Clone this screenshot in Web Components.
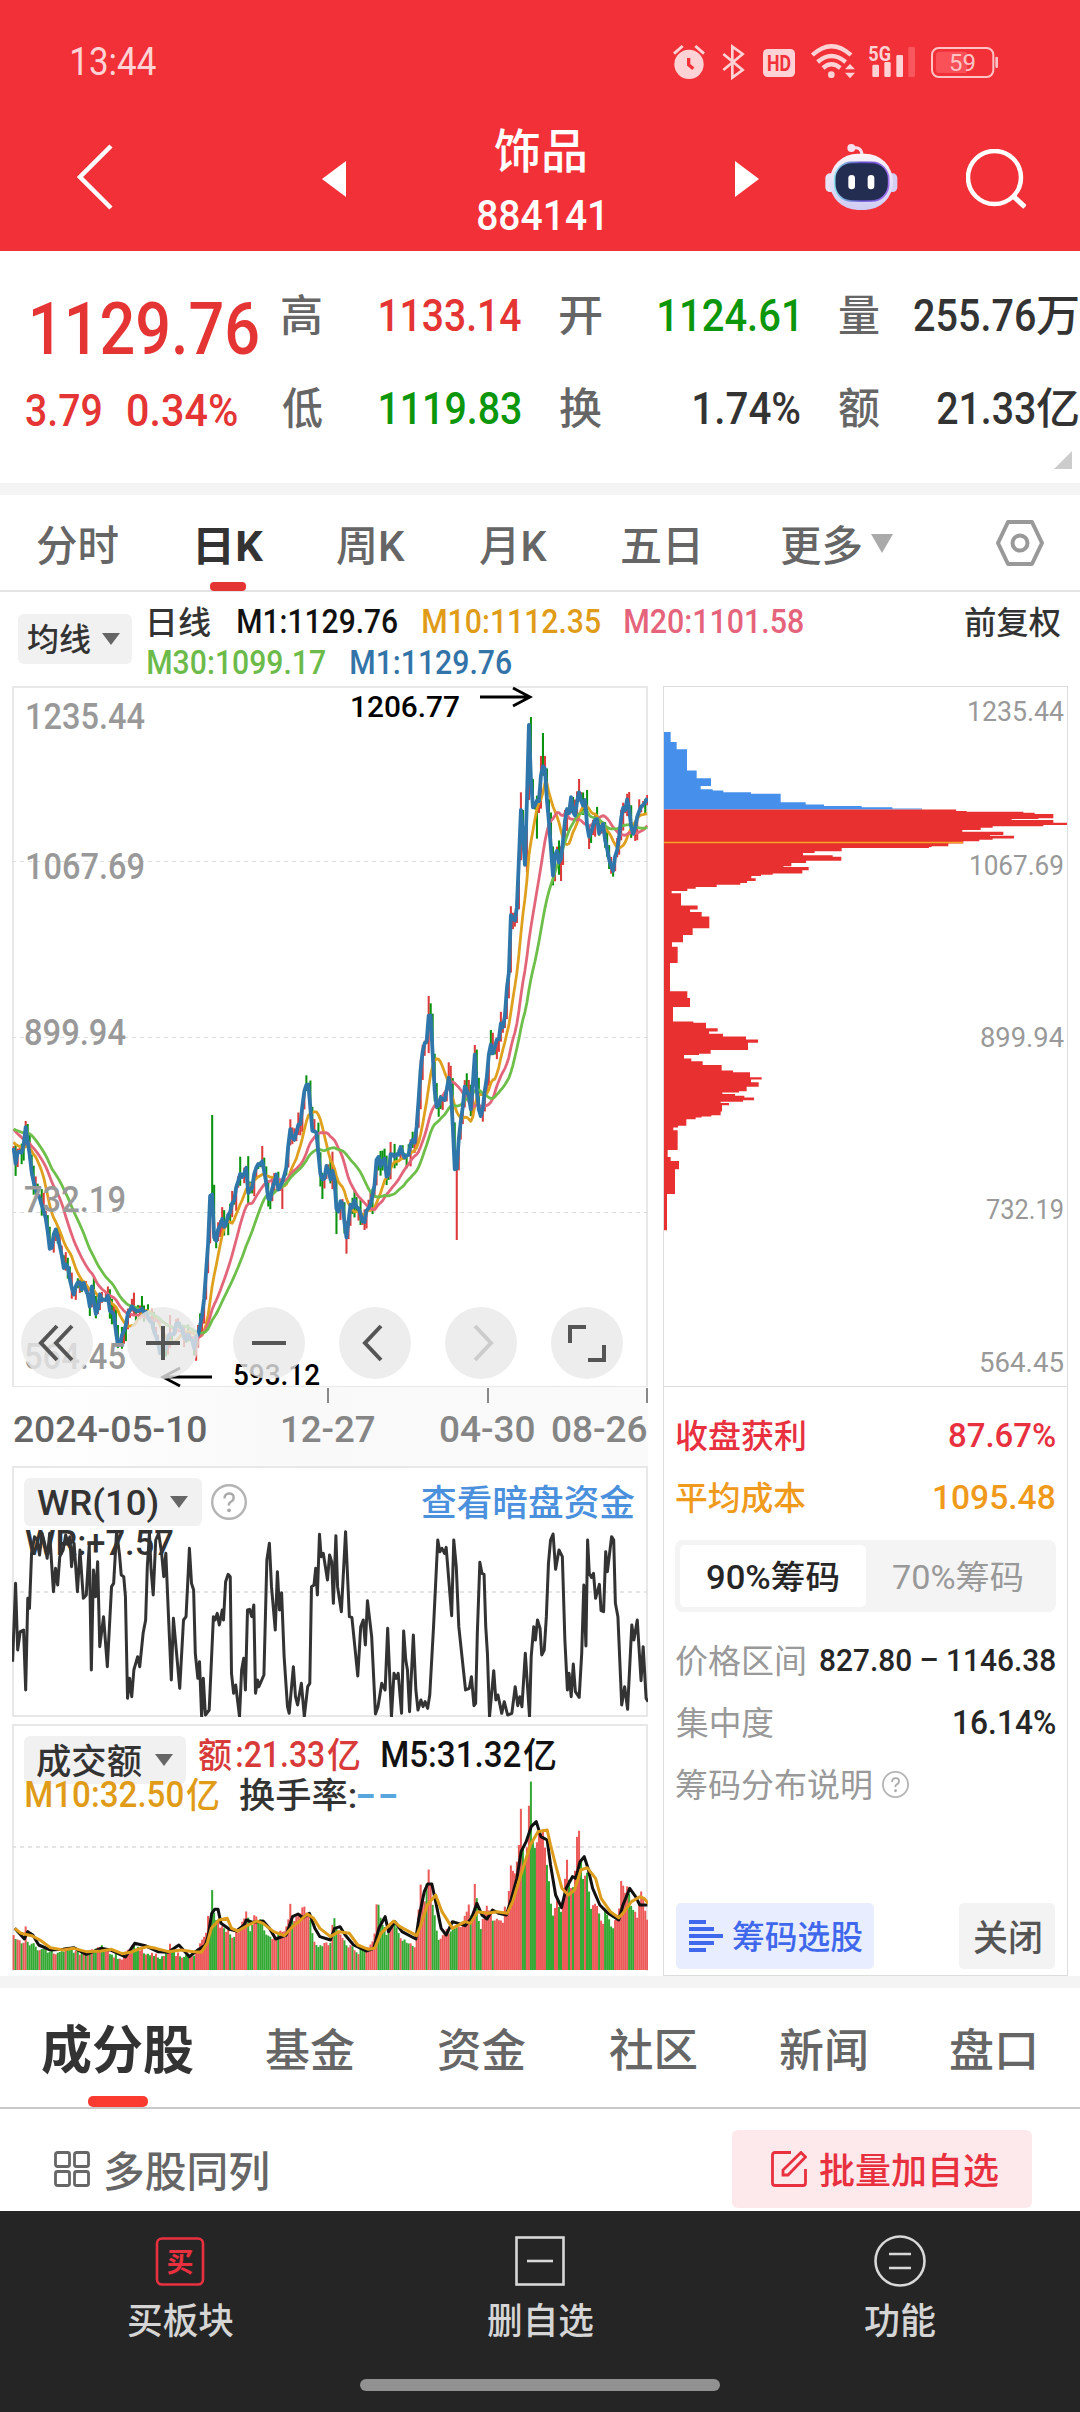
<!DOCTYPE html>
<html lang="zh-CN">
<head>
<meta charset="utf-8">
<title>饰品 884141</title>
<style>
  body { margin: 0; background: #fff; font-family: Roboto, "Noto Sans CJK SC", sans-serif; }
</style>
</head>
<body>
<stock-page></stock-page>

<script>
const FONT = 'Roboto, "Noto Sans CJK SC", sans-serif';

// one line of text squeezed or stretched so that its ink is exactly `w` wide
const ctx = document.createElement('canvas').getContext('2d');
class FitText extends HTMLElement {
  connectedCallback() {
    const w = +this.getAttribute('w');
    const size = +this.getAttribute('size');
    const weight = this.getAttribute('weight') || 400;
    const text = this.textContent.trim();
    ctx.font = `${weight} ${size}px ${FONT}`;
    const m = ctx.measureText(text);
    const k = w / (m.actualBoundingBoxLeft + m.actualBoundingBoxRight);
    // han glyphs sit a little high in a Roboto line
    const dy = /[\u4e00-\u9fff]/.test(text) ? size * .045 : 0;
    if (!this.shadowRoot) this.attachShadow({ mode: 'open' });
    this.shadowRoot.innerHTML = `
      <style>
        :host { display: block; flex: none; width: ${w}px; height: ${size}px; }
        span { display: block; width: max-content; white-space: nowrap; transform-origin: 0 0;
               font: ${weight} ${size}px/${size}px ${FONT};
               transform: translate(${m.actualBoundingBoxLeft * k}px, ${dy}px) scaleX(${k}); }
      </style>
      <span><slot></slot></span>`;
  }
}
customElements.define('fit-text', FitText);

function define(name, html) {
  customElements.define(name, class extends HTMLElement {
    connectedCallback() {
      if (this.shadowRoot) return;
      this.attachShadow({ mode: 'open' }).innerHTML = typeof html === 'function' ? html(this) : html;
    }
  });
}

const t = (text, w, size, style = '', weight = 500) =>
  `<fit-text w="${w}" size="${size}" weight="${weight}" style="${style}">${text}</fit-text>`;

/* ---------- header ---------- */

define('status-bar', `
  <style>
    :host { display: flex; align-items: center; height: 124px; padding: 0 60px 0 72px;
            justify-content: space-between; box-sizing: border-box; color: #ffd3d5; }
    svg { display: block; width: 360px; height: 64px; }
  </style>
  ${t('13:44', 84, 38, '', 400)}
  <svg viewBox="0 0 1080 192" fill="#ffd3d5" font-family='${FONT}'>
    <circle cx="87" cy="103" r="44"/>
    <path d="M42 71L68 48M106 48L132 71" stroke="#ffd3d5" stroke-width="9"/>
    <path d="M86 84V104L100 116" fill="none" stroke="#f23037" stroke-width="10"/>
    <path d="M190 72L248 120L217 143V50L248 72L190 120" fill="none" stroke="#ffd3d5" stroke-width="8"/>
    <rect x="309" y="57" width="96" height="84" rx="14"/>
    <text x="321" y="122" font-size="64" font-weight="700" fill="#f23037" textLength="72" lengthAdjust="spacingAndGlyphs">HD</text>
    <g fill="none" stroke="#ffd3d5" stroke-width="13">
      <path d="M457 75Q514 22 573 75M473 96Q514 60 557 96M489 114Q514 92 541 114"/>
    </g>
    <circle cx="514" cy="134" r="10"/>
    <path d="M555 118L570 102L585 118ZM555 128L570 145L585 128Z"/>
    <text x="625" y="92" font-size="62" font-weight="700" textLength="68" lengthAdjust="spacingAndGlyphs">5G</text>
    <rect x="637" y="104" width="20" height="37" rx="4"/>
    <rect x="673" y="96" width="19" height="45" rx="4"/>
    <rect x="709" y="75" width="20" height="66" rx="4"/>
    <rect x="745" y="51" width="20" height="90" rx="4" fill="#f8575d"/>
    <rect x="816" y="54" width="184" height="87" rx="20" fill="none" stroke="#ffc3c6" stroke-width="6"/>
    <rect x="828" y="65" width="94" height="64" rx="10" fill="#fa5057"/>
    <rect x="1006" y="80" width="8" height="34" rx="4" fill="#ffc3c6"/>
    <text x="867" y="123" font-size="72" fill="#ffc3c6" textLength="81" lengthAdjust="spacingAndGlyphs">59</text>
  </svg>`);

define('nav-bar', `
  <style>
    :host { display: flex; align-items: center; height: 127px; padding: 0 0 18px 77px; box-sizing: border-box; color: #fff; }
    svg { display: block; flex: none; }
    .title { display: flex; flex-direction: column; align-items: center; gap: 22px; width: 128px; height: 105px; margin: 0 131px 0 130px; }
  </style>
  <svg width="36" height="66" viewBox="0 0 36 66" style="margin-bottom:4px"><path d="M34 2L3 33L34 64" fill="none" stroke="#fff" stroke-width="4.500"/></svg>
  <svg width="24" height="36" viewBox="0 0 24 36" style="margin-left:209px"><path d="M24 0V36L0 18Z" fill="#fff"/></svg>
  <div class="title">
    ${t('饰品', 90, 47)}
    ${t('884141', 124, 42)}
  </div>
  <svg width="24" height="36" viewBox="0 0 24 36"><path d="M0 0V36L24 18Z" fill="#fff"/></svg>
  <svg width="74" height="70" viewBox="74 36 222 210" style="margin:0 0 2px 66px">
    <defs>
      <linearGradient id="shell" x2="0" y2="1"><stop offset="0" stop-color="#fdf4f8"/><stop offset="1" stop-color="#cfccf4"/></linearGradient>
      <linearGradient id="rim"><stop offset="0" stop-color="#8fe0ee"/><stop offset=".5" stop-color="#5b48c8"/><stop offset="1" stop-color="#a070f0"/></linearGradient>
    </defs>
    <path d="M154 52Q184 44 185 72" fill="none" stroke="#f6dfee" stroke-width="9"/>
    <circle cx="153" cy="51" r="12" fill="#f6dfee"/>
    <rect x="75" y="127" width="30" height="56" rx="14" fill="#e8e2f6"/>
    <rect x="261" y="127" width="30" height="56" rx="14" fill="#d6cff4"/>
    <rect x="88" y="68" width="190" height="169" rx="84" fill="url(#shell)"/>
    <rect x="103" y="94" width="162" height="116" rx="50" fill="#232d52" stroke="url(#rim)" stroke-width="5"/>
    <rect x="144" y="132" width="20" height="43" rx="10" fill="#fff"/>
    <rect x="202" y="132" width="20" height="43" rx="10" fill="#fff"/>
  </svg>
  <svg width="60" height="60" viewBox="0 0 60 60" style="margin-left:67px"><circle cx="28.500" cy="28.500" r="26.500" fill="none" stroke="#fff" stroke-width="4.500"/><path d="M47 47L59 58" stroke="#fff" stroke-width="5"/></svg>`);

define('quote-board', `
  <style>
    :host { display: grid; grid-template-columns: 282px 278px 279px 241px; height: 232px; border-bottom: 12px solid #f4f4f4; position: relative; overflow: hidden; }
    div { display: flex; flex-direction: column; padding-top: 42px; }
    p { display: flex; justify-content: space-between; margin: 0; height: 93px; color: #333; }
    .k { color: #666; }
    .up { color: #e43433; } .down { color: #0b960b; }
    .fold { position: absolute; right: 8px; bottom: 14px; width: 0; height: 0;
            border-left: 18px solid transparent; border-bottom: 18px solid #ccc; }
  </style>
  <div>
    <p class="up" style="height:96px">${t('1129.76', 225, 73, 'margin-left:33px')}</p>
    <p class="up" style="justify-content:start">${t('3.79', 75, 44, 'margin-left:26px')}${t('0.34%', 109, 44, 'margin-left:27px')}</p>
  </div>
  <div>
    <p><span class="k">${t('高', 39, 43)}</span><span class="up">${t('1133.14', 141, 45, 'margin-right:39px')}</span></p>
    <p><span class="k">${t('低', 40, 43)}</span><span class="down">${t('1119.83', 141, 45, 'margin-right:39px')}</span></p>
  </div>
  <div>
    <p><span class="k">${t('开', 41, 43)}</span><span class="down">${t('1124.61', 137, 45, 'margin-right:43px')}</span></p>
    <p><span class="k">${t('换', 41, 43)}</span>${t('1.74%', 106, 45, 'margin-right:39px')}</p>
  </div>
  <div>
    <p><span class="k">${t('量', 40, 43)}</span>${t('255.76', 121, 45, 'margin-left:33px')}${t('万', 41, 43, 'margin-right:2px')}</p>
    <p><span class="k">${t('额', 40, 43)}</span>${t('21.33', 98, 45, 'margin-left:56px')}${t('亿', 41, 43, 'margin-right:2px')}</p>
  </div>
  <i class="fold"></i>`);

define('period-tabs', `
  <style>
    :host { display: flex; align-items: flex-start; height: 97px; padding: 29px 36px 0 37px; box-sizing: border-box; border-bottom: 2px solid #e4e4e4; color: #666; }
    .on { display: flex; flex-direction: column; align-items: center; color: #333; }
    .on::after { content: ""; width: 36px; height: 9px; border-radius: 4px; background: #e43433; margin: 16px 5px 0 0; }
    .more { width: 0; height: 0; border: 11px solid transparent; border-top: 19px solid #aaa; border-bottom: 0; margin: 10px 0 0 10px; }
    svg { margin: -4px 0 0 103px; }
  </style>
  ${t('分时', 81, 42)}
  <div class="on" style="margin-left:80px">${t('日K', 65, 42, '', 700)}</div>
  ${t('周K', 68, 42, 'margin-left:74px')}
  ${t('月K', 67, 42, 'margin-left:75px')}
  ${t('五日', 76, 42, 'margin-left:75px')}
  ${t('更多', 80, 42, 'margin-left:83px')}
  <i class="more"></i>
  <svg width="48" height="46" viewBox="0 0 48 46" fill="none" stroke="#999" stroke-width="4"><path d="M12 2H36L46 23L36 44H12L2 23Z" stroke-linejoin="round"/><circle cx="24" cy="23" r="7.500"/></svg>`);

define('pick-button', el => `
  <style>
    :host { display: flex; flex: none; align-items: center; box-sizing: border-box; background: #f1f1f1; border-radius: 6px; color: #333; }
    i { width: 0; height: 0; border: 9px solid transparent; border-top: 12px solid #666; border-bottom: 0; margin-left: ${el.getAttribute('gap')}px; }
  </style>
  <slot></slot><i></i>`);

define('ma-legend', `
  <style>
    :host { display: flex; height: 94px; box-sizing: border-box; padding: 12px 19px 0 18px; }
    pick-button { width: 114px; height: 50px; margin-top: 10px; padding-left: 10px; }
    .rows { width: 815px; margin-left: 18px; }
    p { display: flex; margin: 0; height: 41px; }
  </style>
  <pick-button gap="12">${t('均线', 62, 32)}</pick-button>
  <div class="rows">
    <p>${t('日线', 60, 32, 'color:#333;margin-top:2px')}
       ${t('M1:1129.76', 159, 34, 'margin-left:28px;color:#111')}
       ${t('M10:1112.35', 177, 34, 'margin-left:26px;color:#e09c18')}
       ${t('M20:1101.58', 178, 34, 'margin-left:25px;color:#e5637b')}</p>
    <p>${t('M30:1099.17', 177, 34, 'color:#6cbb4a;margin-left:-2px')}
       ${t('M1:1129.76', 160, 34, 'margin-left:26px;color:#3274a8')}</p>
  </div>
  ${t('前复权', 96, 32, 'color:#333;margin-top:2px')}`);

/* ---------- chart data: x 30..1540 on the plot grid, 317 daily bars ---------- */

const X0 = 30, X1 = 1540, BARS = 317;
const pts = s => s.trim().split(/\s+/).map(p => p.split(',').map(Number));
const line = (list, color, w) =>
  `<polyline points="${list.map(p => p.join()).join(' ')}" fill="none" stroke="${color}" stroke-width="${w}" stroke-linejoin="round" vector-effect="non-scaling-stroke"/>`;
const at = (list, x) => {
  const i = list.findIndex(p => p[0] >= x);
  if (i < 0) return list[list.length - 1][1];
  if (i === 0) return list[0][1];
  const [a, b] = [list[i - 1], list[i]];
  return a[1] + (b[1] - a[1]) * (x - a[0]) / (b[0] - a[0]);
};
const rnd = n => { const v = Math.sin(n * 127.1 + 3.7) * 43758.5453; return v - Math.floor(v); };
const barX = i => X0 + (i + .5) * (X1 - X0) / BARS;

const closeLine = pts(`30,1380 36,1460 42,1410 50,1415 55,1425 60,1345 66,1390 72,1450 80,1510 88,1530 95,1550 104,1600 112,1640 120,1720
 128,1650 138,1670 145,1720 152,1760 160,1740 166,1810 175,1845 183,1790 192,1825 200,1815 208,1850 213,1880 218,1820 224,1870 230,1910 237,1850 246,1870
 254,1845 262,1890 270,1910 276,1960 282,2000 290,1965 298,1950 304,1890 312,1885 320,1880 330,1890 336,1880 345,1895 355,1930 362,1930
 370,1970 378,2010 387,2025 394,2000 402,1950 410,1975 420,1930 430,1950 440,1975 452,1970 462,2000 470,1960 478,1920 486,1840 490,1770
 494,1700 498,1580 502,1470 506,1640 512,1690 518,1660 526,1620 534,1635 542,1600 550,1580 558,1550 564,1510 570,1470 576,1490 584,1460
 590,1545 597,1530 603,1500 607,1450 614,1460 624,1435 630,1500 640,1575 648,1510 656,1490 662,1535 670,1510 676,1480 682,1450 688,1345
 697,1390 704,1355 712,1335 720,1270 726,1205 735,1230 740,1340 747,1350 754,1370 760,1480 768,1510 776,1460 784,1500 792,1460 800,1600
 812,1560 824,1670 832,1580 842,1570 850,1580 856,1610 864,1630 870,1600 880,1585 888,1530 896,1420 906,1460 914,1440 921,1510 930,1410
 940,1425 948,1415 953,1395 962,1445 970,1420 978,1375 986,1400 992,1320 996,1230 1002,1130 1008,1100 1013,1090 1019,990 1024,1020 1030,1190
 1036,1280 1045,1260 1058,1260 1068,1170 1074,1280 1082,1515 1088,1410 1095,1330 1105,1220 1112,1230 1119,1295 1128,1130 1133,1240 1140,1310
 1148,1270 1158,1180 1164,1090 1170,1120 1178,1080 1185,1070 1190,1030 1197,1035 1203,950 1209,880 1214,700 1220,720 1225,735 1230,640
 1238,370 1247,555 1258,135 1263,380 1268,400 1274,370 1280,380 1287,260 1295,270 1302,400 1314,600 1320,500 1330,570 1337,500 1345,385
 1352,400 1358,350 1364,415 1376,335 1383,380 1390,355 1396,470 1404,460 1418,410 1424,460 1433,430 1442,510 1455,585 1462,520 1470,490
 1478,370 1484,390 1490,350 1502,470 1512,430 1522,370 1530,385 1540,345`);

// days whose range runs far beyond the close: [x, y, colour]
const spikes = [[60,1323,'r'],[317,1838,'r'],[335,1848,'g'],[406,1905,'r'],[502,1305,'g'],[572,1430,'g'],[621,1398,'r'],[673,1587,'r'],
  [768,1557,'g'],[792,1415,'r'],[800,1662,'g'],[824,1721,'r'],[867,1650,'r'],[1019,948,'r'],[1024,970,'g'],[1068,1147,'r'],
  [1086,1680,'r'],[1110,1180,'g'],[1128,1095,'r'],[1147,1325,'r'],[1166,1050,'g'],[1238,337,'r'],[1261,111,'g'],[1276,476,'g'],
  [1289,159,'g'],[1285,228,'r'],[1333,603,'r'],[1375,297,'r'],[1400,507,'r'],[1418,393,'g'],[1455,590,'g']];

const closes = Array.from({ length: BARS }, (_, i) => {
  const x = barX(i);
  // keep the all-time high sharp, ripple everything else
  if (Math.abs(x - 1258) < 2.4) return 135;
  return at(closeLine, x) + (rnd(i) - .5) * 22;
});
const candles = closes.map((c, i) => {
  const prev = closes[Math.max(0, i - 1)];
  let top = Math.min(c, prev) - rnd(i + 900) ** 2 * 38;
  let bottom = Math.max(c, prev) + rnd(i + 500) ** 2 * 38;
  let up = Math.abs(c - prev) > 30 ? c < prev : rnd(i + 77) > .45;
  const s = spikes.find(p => Math.abs(p[0] - barX(i)) < 2.39);
  if (s) { top = Math.min(top, s[1]); bottom = Math.max(bottom, s[1]); up = s[2] === 'r'; }
  return `<rect x="${(barX(i) - 2.4).toFixed(1)}" y="${top.toFixed(1)}" width="4.900" height="${(bottom - top).toFixed(1)}" fill="${up ? '#dc3b3b' : '#0b920f'}"/>`;
}).join('');

const before = Array.from({ length: 30 }, (_, i) => i < 10 ? 1350 : i < 20 ? 1300 : 1385);
const history = before.concat(closes);
const average = n => closes.map((_, i) => {
  const part = history.slice(i + 31 - n, i + 31);
  return [barX(i), part.reduce((a, b) => a + b, 0) / n];
});

define('price-chart', `
  <style>
    :host { display: block; position: relative; height: 701px; }
    svg { display: block; }
    nav { position: absolute; left: 9px; right: 25px; bottom: 8px; display: flex; justify-content: space-between; }
    nav svg { border-radius: 50%; background: rgba(232,232,232,.8); fill: none; stroke: #555; stroke-width: 4; }
  </style>
  <svg width="636" height="701" viewBox="12 686 636 701" font-family='${FONT}'>
    <rect x="13" y="687" width="634" height="700" fill="none" stroke="#e8e8e8" stroke-width="2"/>
    <path d="M12 861.500H648M12 1037.500H648M12 1212.500H648" stroke="#dcdcdc" stroke-dasharray="4 4"/>
    <g transform="translate(0 680) scale(.42092 .33333)">
      ${candles}
      ${line(average(10), '#dfa01e', 2.8)}
      ${line(average(20), '#e2657a', 2.8)}
      ${line(average(30), '#6dbf4a', 2.8)}
      ${line(closes.map((c, i) => [barX(i), c]), '#2f77ab', 3.8)}
    </g>
    <g font-size="36" font-weight="500" fill="#999">
      <text x="25" y="729" textLength="120" lengthAdjust="spacingAndGlyphs">1235.44</text>
      <text x="25" y="879" textLength="120" lengthAdjust="spacingAndGlyphs">1067.69</text>
      <text x="24" y="1045" textLength="102" lengthAdjust="spacingAndGlyphs">899.94</text>
      <text x="24" y="1212" textLength="102" lengthAdjust="spacingAndGlyphs">732.19</text>
      <text x="24" y="1369" textLength="102" lengthAdjust="spacingAndGlyphs">564.45</text>
    </g>
    <g font-size="30" font-weight="500" fill="#000">
      <text x="350" y="717" textLength="110" lengthAdjust="spacingAndGlyphs">1206.77</text>
      <text x="233" y="1385" textLength="87" lengthAdjust="spacingAndGlyphs">593.12</text>
    </g>
    <path d="M480 697H530M513 688L530 697L513 706M212 1377H163M180 1368L163 1377L180 1386" fill="none" stroke="#000" stroke-width="2.800"/>
  </svg>
  <nav>
    <svg width="72" height="72"><path d="M36 19L20 36L36 53M51 19L35 36L51 53"/></svg>
    <svg width="72" height="72"><path d="M36 19V53M19 36H53"/></svg>
    <svg width="72" height="72"><path d="M19 36H53"/></svg>
    <svg width="72" height="72"><path d="M42 19L26 36L42 53"/></svg>
    <svg width="72" height="72" style="stroke:#ccc"><path d="M30 19L46 36L30 53"/></svg>
    <svg width="72" height="72"><path d="M19 36V20H35M53 38V53H37"/></svg>
  </nav>`);

define('date-axis', `
  <style>
    :host { display: flex; height: 79px; padding-top: 25px; box-sizing: border-box; color: #858585; position: relative;
            background: linear-gradient(90deg, #fff, #f9f9f9 40%, #fafafa); }
    i { position: absolute; top: 1px; width: 2px; height: 15px; background: #888; }
  </style>
  <i style="left:315px"></i><i style="left:475px"></i><i style="left:634px"></i>
  ${t('2024-05-10', 192, 36, 'color:#666;margin-left:2px')}
  ${t('12-27', 92, 36, 'margin-left:76px')}
  ${t('04-30', 94, 36, 'margin-left:66px')}
  ${t('08-26', 94, 36, 'margin-left:18px')}`);

const wr = pts(`30,665 37,430 42,630 48,575 56,570 61,750 66,475 70,505 75,340 82,290 88,300 94,345 100,280 106,310 112,355 118,280 127,455
 132,385 137,435 142,350 150,330 156,285 162,310 166,290 170,380 176,310 184,455 190,330 198,475 205,465 212,315 217,690 222,390 227,470 232,365
 237,620 246,530 255,680 265,440 270,430 277,275 284,345 288,405 294,410 298,470 303,775 308,715 313,770 318,690 327,650 332,680 340,580 346,540
 350,380 355,280 359,390 364,465 370,300 377,280 384,340 389,410 394,340 400,520 407,720 412,535 427,745 436,540 442,530 450,325 455,430 460,450
 464,640 470,715 474,665 479,830 483,715 488,825 497,810 507,530 511,540 516,520 521,555 528,510 531,540 536,425 542,403 547,410 550,700 555,760
 560,735 569,830 574,690 579,655 583,750 588,510 593,508 598,530 603,495 607,760 612,720 615,740 627,705 634,360 640,310 645,440 654,570 659,395
 664,510 669,458 675,650 683,800 687,820 697,680 702,770 707,795 716,730 723,830 731,740 736,730 740,440 746,435 750,385 754,465 759,283 763,350
 768,340 778,420 783,345 788,365 792,490 798,287 802,440 811,515 821,275 830,530 836,532 843,620 850,708 857,560 863,540 868,615 873,482 883,590
 892,822 898,800 907,730 915,750 921,565 930,830 936,700 941,715 946,700 954,820 959,573 964,660 968,690 973,815 982,585 988,750 993,810 1000,780
 1005,800 1010,785 1016,805 1021,765 1030,560 1040,300 1045,335 1050,325 1056,340 1060,322 1073,527 1078,300 1084,380 1090,560 1106,750 1115,745
 1120,710 1126,797 1130,790 1134,580 1140,367 1145,400 1150,403 1154,560 1158,640 1163,830 1173,692 1178,780 1183,765 1192,820 1198,785 1206,825
 1216,820 1224,740 1230,797 1235,770 1240,800 1248,640 1258,830 1262,650 1268,560 1272,600 1277,540 1283,565 1287,645 1293,630 1298,530 1303,370
 1308,300 1314,282 1320,388 1328,330 1336,350 1342,600 1348,750 1352,700 1357,770 1362,672 1367,755 1376,772 1382,640 1387,435 1392,618 1396,300
 1400,400 1405,412 1410,400 1415,475 1424,433 1428,512 1434,515 1439,335 1443,395 1453,290 1458,300 1462,490 1468,530 1477,795 1484,740 1491,808
 1501,555 1506,600 1514,540 1523,722 1528,620 1535,775 1540,785`);

const help = r => `<svg width="${r * 2}" height="${r * 2}" viewBox="0 0 36 36"><circle cx="18" cy="18" r="16.800" fill="none" stroke="#b4b4b4" stroke-width="2.400"/>
  <path d="M13.500 14.500Q13.500 9.500 18.200 9.500T22.600 14Q22.600 16.300 20 17.700T18 21.500" fill="none" stroke="#aaa" stroke-width="2.400"/><circle cx="18" cy="26.300" r="1.900" fill="#aaa"/></svg>`;

define('wr-panel', `
  <style>
    :host { display: grid; height: 251px; }
    .plot, .bar { grid-area: 1 / 1; }
    .bar { display: flex; align-items: center; height: 48px; margin: 12px 13px 0 12px; }
    pick-button { width: 178px; height: 48px; padding-left: 13px; }
    .bar > svg { margin-left: 9px; }
  </style>
  <svg class="plot" width="636" height="251" viewBox="12 1466 636 251" font-family='${FONT}'>
    <rect x="13" y="1467" width="634" height="249" fill="none" stroke="#e8e8e8" stroke-width="2"/>
    <path d="M12 1592H648" stroke="#e4e4e4" stroke-width="2" stroke-dasharray="4 4"/>
    <text x="25" y="1555" font-size="35" font-weight="500" fill="#333" textLength="149" lengthAdjust="spacingAndGlyphs">WR:+7.57</text>
    <g transform="translate(0 1440) scale(.42092 .33333)">${line(wr, '#333', 3)}</g>
  </svg>
  <div class="bar">
    <pick-button gap="12">${t('WR(10)', 121, 35, 'margin-top:2px')}</pick-button>
    ${help(18)}
    ${t('查看暗盘资金', 213, 36, 'margin-left:auto;color:#4a90dd')}
  </div>`);

const volTop = pts(`30,655 45,680 57,690 60,600 63,690 70,685 90,700 130,712 160,700 185,715 210,712 250,695 265,720 290,730 305,700 313,705 316,657
 320,700 345,710 380,725 402,710 406,672 410,710 440,728 465,715 478,680 490,650 494,620 496,548 499,640 502,480 506,580 515,620 530,640 555,665
 570,640 586,590 595,650 605,600 620,620 640,670 660,660 680,640 687,610 690,570 694,620 700,610 724,577 735,610 750,690 770,690 787,680
 792,592 797,640 820,685 850,712 880,690 891,650 896,530 901,600 905,620 920,660 935,620 950,660 970,690 988,690 993,600 1000,500 1008,560
 1013,520 1019,460 1028,570 1042,680 1055,650 1075,650 1095,640 1108,590 1112,563 1120,620 1125,600 1128,505 1133,560 1140,660 1155,570
 1170,610 1195,620 1200,565 1204,600 1214,448 1222,490 1230,420 1234,370 1238,273 1242,400 1250,450 1257,262 1262,198 1266,370 1270,400
 1280,360 1290,340 1300,450 1312,610 1322,560 1335,590 1342,500 1347,433 1352,500 1357,520 1365,500 1370,367 1375,340 1380,430 1385,490
 1395,470 1405,590 1415,560 1433,630 1436,590 1455,640 1470,590 1475,500 1480,500 1484,540 1490,510 1500,570 1515,610 1522,520 1530,560 1540,630`);
const vol5 = pts(`35,640 58,672 66,650 78,660 92,690 120,705 150,703 175,698 205,718 240,700 262,705 298,726 320,685 345,692 375,710 400,712 425,690
 450,725 470,705 488,690 495,660 503,595 510,583 518,583 525,625 545,643 562,648 580,630 585,615 600,622 625,618 640,640 655,672 680,660 695,605 708,597 720,608
 735,595 748,640 760,665 785,675 795,640 808,635 820,660 840,690 870,708 888,700 900,640 915,605 923,650 938,620 955,650 988,672 995,610
 1008,530 1016,507 1026,507 1035,560 1048,640 1060,660 1075,620 1105,632 1120,610 1133,565 1145,600 1157,612 1170,585 1185,595 1203,600 1215,550
 1228,490 1238,410 1250,380 1262,335 1274,320 1285,365 1300,375 1308,450 1320,540 1334,578 1345,520 1360,485 1368,490 1378,440 1388,425
 1397,460 1408,520 1425,570 1445,595 1470,615 1480,570 1496,520 1510,545 1520,570 1538,570`);
const vol10 = pts(`35,640 50,655 75,662 95,675 120,698 150,705 175,700 205,710 240,708 265,703 290,716 310,712 330,702 350,695 370,700 400,710 430,705
 460,710 478,712 492,685 502,640 520,615 540,610 550,640 565,648 590,630 610,618 625,625 650,650 675,662 695,635 710,620 730,597 745,610
 760,640 785,665 805,650 830,655 850,690 875,703 890,700 905,655 935,618 950,635 990,662 1000,630 1015,570 1035,540 1050,590 1075,640
 1105,620 1118,625 1135,590 1160,595 1180,590 1205,595 1218,560 1230,510 1245,450 1260,390 1278,350 1300,345 1308,390 1320,450 1335,520
 1350,540 1365,525 1380,465 1395,458 1415,490 1428,550 1450,590 1470,608 1480,595 1500,560 1520,545 1530,550 1540,565`);
const volBars = closes.map((c, i) => {
  const x = barX(i), d = c - closes[Math.max(0, i - 1)];
  const y = at(volTop, x) + (rnd(i + 40) - .5) * 16;
  let up = Math.abs(d) > 16 ? d < 0 : rnd(i + 77) > .42;
  if (x > 1172 && x < 1236) up = true;
  if (Math.abs(x - 502) < 3 || Math.abs(x - 1262) < 3) up = false;
  return `<rect x="${(x - 2.4).toFixed(1)}" y="${y.toFixed(1)}" width="4.800" height="${(765 - y).toFixed(1)}" fill="${up ? '#ed5a5a' : '#33a832'}"/>`;
}).join('');

define('volume-panel', `
  <style>
    :host { display: grid; height: 247px; margin-top: 7px; }
    .plot, .text { grid-area: 1 / 1; }
    .text { padding: 12px 12px 0; }
    p { display: flex; margin: 0; height: 40px; }
    p > fit-text { margin-top: 1px; }
    pick-button { width: 162px; height: 48px; padding-left: 13px; }
  </style>
  <svg class="plot" width="636" height="247" viewBox="12 1724 636 247">
    <path d="M13 1971V1725H647V1971" fill="none" stroke="#e8e8e8" stroke-width="2"/>
    <path d="M12 1847H648" stroke="#e4e4e4" stroke-width="2" stroke-dasharray="4 4"/>
    <g transform="translate(0 1715) scale(.42092 .33333)">${volBars}${line(vol5, '#111', 3)}${line(vol10, '#dd9c1c', 3)}</g>
  </svg>
  <div class="text">
    <p><pick-button gap="13">${t('成交额', 105, 35)}</pick-button>
       ${t('额', 33, 35, 'margin-left:13px;color:#d83a3a')}${t(':21.33', 87, 36, 'margin-left:5px;color:#d83a3a')}${t('亿', 33, 35, 'margin-left:3px;color:#d83a3a')}
       ${t('M5:31.32', 139, 36, 'margin-left:22px;color:#111')}${t('亿', 33, 35, 'margin-left:2px;color:#111')}</p>
    <p style="color:#e09c18">${t('M10:32.50', 157, 36, 'margin-left:2px')}${t('亿', 33, 35, 'margin-left:3px')}
       ${t('换手率:', 115, 35, 'margin-left:21px;color:#333')}${t('--', 38, 36, 'margin-left:3px;color:#58a6de', 700)}</p>
  </div>`);

/* ---------- chip distribution: [first y, right edge] of every step ---------- */

const chipsAbove = pts(`115,62 137,80 153,111 200,140 217,183 234,152 241,188 244,220 248,303 251,392 270,467 275,522 278,635 281,727 284,816 286,816`);
const chipsBelow = pts(`286,918 289,950 291,1120 293,1154 296,1210 305,1165 307,1085 309,1210 315,1251 320,1180 323,1028 326,992 331,937 335,1060
 342,1020 344,1092 350,1028 353,988 356,940 361,895 367,845 369,837 371,575 378,494 382,459 387,548 390,574 399,468 404,424 411,400 413,476
 420,457 427,368 430,333 433,304 438,317 444,291 448,271 452,200 457,137 461,112 466,65 471,93 498,143 507,120 512,155 522,178 548,128 563,99
 579,66 589,83 625,60 687,112 702,120 722,69 754,130 757,168 769,203 776,177 781,219 787,288 794,324 801,294 817,182 825,147 828,102 836,124
 842,158 850,215 862,249 866,300 877,335 882,303 888,326 898,290 908,267 911,217 914,255 918,283 922,312 928,279 931,212 934,237 939,216
 953,212 961,184 964,155 966,137 970,109 984,84 988,70 994,83 1038,53 1053,62 1062,87 1080,75 1135,51 1215,51`);
const steps = list => 'M42 ' + list[0][0] + list.map(([y, x], i) =>
  `H${x}V${(list[i + 1] || [y])[0]}`).join('') + 'H42Z';

define('chip-panel', `
  <style>
    :host { display: flex; flex-direction: column; width: 405px; height: 1290px; box-sizing: border-box; border: 1px solid #ddd; color: #262626; }
    .plot { display: block; flex: none; border-bottom: 1px solid #ddd; }
    .row { display: flex; align-items: center; justify-content: space-between; height: 62px; padding: 0 12px 0 12px; color: #999; }
    .row svg { margin-left: 11px; }
    .row b { font-weight: 400; color: #262626; }
    .seg { display: flex; margin: 12px 11px 17px; padding: 5px; height: 62px; background: #f4f4f4; border-radius: 8px; }
    .seg div { display: flex; flex: 1; align-items: center; justify-content: center; border-radius: 5px; color: #999; }
    .seg .on { background: #fff; color: #262626; }
    .foot { display: flex; justify-content: space-between; margin: auto 12px 6px 12px; height: 66px; }
    .foot div { display: flex; align-items: center; justify-content: center; border-radius: 5px; background: #f3f3f3; color: #555; width: 96px; }
    .foot .pick { background: #e8eeff; color: #3f68ec; width: 198px; }
  </style>
  <svg class="plot" width="403" height="699" viewBox="664 687 403 699" font-family='${FONT}' font-size="28" fill="#999">
    <g transform="translate(650 680) scale(.33333 .4529)">
      <path d="${steps(chipsAbove)}" fill="#4690ec"/>
      <path d="${steps(chipsBelow)}" fill="#e93030"/>
    </g>
    <path d="M664 842.500H963" stroke="#f5a623" stroke-width="1.500"/>
    <text x="967" y="721" textLength="97" lengthAdjust="spacingAndGlyphs">1235.44</text>
    <text x="969" y="875" textLength="95" lengthAdjust="spacingAndGlyphs">1067.69</text>
    <text x="980" y="1047" textLength="84" lengthAdjust="spacingAndGlyphs">899.94</text>
    <text x="986" y="1219" textLength="78" lengthAdjust="spacingAndGlyphs">732.19</text>
    <text x="979" y="1372" textLength="85" lengthAdjust="spacingAndGlyphs">564.45</text>
  </svg>
  <div class="row" style="color:#e8303f;margin-top:17px">${t('收盘获利', 129, 33)}${t('87.67%', 106, 33)}</div>
  <div class="row" style="color:#f09a1c">${t('平均成本', 129, 33)}${t('1095.48', 121, 33)}</div>
  <div class="seg"><div class="on">${t('90%筹码', 132, 33)}</div><div>${t('70%筹码', 130, 33, '', 400)}</div></div>
  <div class="row">${t('价格区间', 129, 33, '', 400)}<b>${t('827.80 – 1146.38', 235, 32)}</b></div>
  <div class="row">${t('集中度', 97, 33, '', 400)}<b>${t('16.14%', 101, 33)}</b></div>
  <div class="row" style="justify-content:start">${t('筹码分布说明', 195, 33, '', 400)}${help(13.5)}</div>
  <div class="foot">
    <div class="pick">
      <svg width="34" height="32" viewBox="0 0 34 32" style="margin-right:10px"><path d="M0 2H17M0 9H25M0 16H34M0 23H25M0 30H17" stroke="#3f68ec" stroke-width="4"/></svg>
      ${t('筹码选股', 129, 33)}
    </div>
    <div>${t('关闭', 67, 36, 'margin-top:2px')}</div>
  </div>`);

/* ---------- lower part ---------- */

define('section-tabs', `
  <style>
    :host { display: flex; height: 121px; padding: 39px 0 0 42px; box-sizing: border-box; border-bottom: 2px solid #c8c8c8; color: #666; }
    fit-text { margin-right: 84px; }
    .on { display: flex; flex: none; flex-direction: column; color: #333; width: 224px; }
    .on fit-text { margin: -3px 0 0; }
    .on::after { content: ""; width: 60px; height: 12px; margin: 20px 0 0 46px; border-radius: 5px; background: #fb3b2f; }
  </style>
  <div class="on">${t('成分股', 151, 52, '', 700)}</div>
  ${t('基金', 88, 45)}${t('资金', 87, 45)}${t('社区', 87, 45)}${t('新闻', 86, 45)}${t('盘口', 84, 45, 'margin-right:0')}`);

define('list-tools', `
  <style>
    :host { display: flex; align-items: flex-start; justify-content: space-between; height: 102px; padding: 21px 48px 0 54px; box-sizing: border-box; color: #666; }
    div { display: flex; align-items: center; height: 78px; }
    .add { padding: 0 34px 0 39px; background: #fde9eb; border-radius: 6px; color: #e8303f; }
  </style>
  <div>
    <svg width="36" height="36" viewBox="0 0 36 36" fill="none" stroke="#666" stroke-width="2.800" style="margin-right:15px"><rect x="1.500" y="1.500" width="14" height="14" rx="2"/><rect x="20.500" y="1.500" width="14" height="14" rx="2"/><rect x="1.500" y="20.500" width="14" height="14" rx="2"/><rect x="20.500" y="20.500" width="14" height="14" rx="2"/></svg>
    ${t('多股同列', 163, 42, 'margin-top:3px')}
  </div>
  <div class="add">
    <svg width="36" height="36" viewBox="0 0 36 36" fill="none" stroke="#e8303f" stroke-width="2.800" style="margin-right:13px"><path d="M20 1.500H4Q1.500 1.500 1.500 4V32Q1.500 34.500 4 34.500H32Q34.500 34.500 34.500 32V18"/><path d="M12 24V19L30 1.500L34.500 6L17 24Z"/></svg>
    ${t('批量加自选', 178, 36, 'margin-top:2px')}
  </div>`);

define('action-bar', `
  <style>
    :host { display: grid; grid-template: 168px 12px / repeat(3, 1fr); height: 201px; background: #252525; color: #d5d5d5; justify-items: center; overflow: hidden; }
    div { display: flex; flex-direction: column; align-items: center; padding-top: 24px; gap: 15px; }
    svg { display: block; fill: none; stroke: #d8d8d8; stroke-width: 2.600; }
    i { grid-column: 1 / 4; width: 360px; height: 12px; border-radius: 6px; background: #919191; }
  </style>
  <div>
    <svg width="52" height="52" viewBox="0 0 52 52"><rect x="3" y="3.500" width="46" height="46" rx="5" stroke="#e8303f"/>
      <text x="12.500" y="37" font-size="27" font-weight="700" fill="#e8303f" stroke="none" font-family='${FONT}'>买</text></svg>
    ${t('买板块', 105, 36)}
  </div>
  <div>
    <svg width="52" height="52" viewBox="0 0 52 52"><rect x="2.500" y="2.500" width="47" height="47"/><path d="M13 26H39"/></svg>
    ${t('删自选', 105, 36)}
  </div>
  <div>
    <svg width="52" height="52" viewBox="0 0 52 52"><circle cx="26" cy="26" r="24.500"/><path d="M15 19H37M15 33H37"/></svg>
    ${t('功能', 70, 36)}
  </div>
  <i></i>`);

define('stock-page', `
  <style>
    :host { display: flex; flex-direction: column; width: 1080px; height: 2412px; overflow: hidden; background: #fff; }
    header { background: #f23037; }
    main { display: flex; justify-content: space-between; height: 1290px; padding: 0 12px; border-bottom: 12px solid #f4f4f4; }
    .charts { width: 636px; }
  </style>
  <header><status-bar></status-bar><nav-bar></nav-bar></header>
  <quote-board></quote-board>
  <period-tabs></period-tabs>
  <ma-legend></ma-legend>
  <main>
    <div class="charts">
      <price-chart></price-chart>
      <date-axis></date-axis>
      <wr-panel></wr-panel>
      <volume-panel></volume-panel>
    </div>
    <chip-panel></chip-panel>
  </main>
  <section-tabs></section-tabs>
  <list-tools></list-tools>
  <action-bar></action-bar>`);
</script>
</body>
</html>
